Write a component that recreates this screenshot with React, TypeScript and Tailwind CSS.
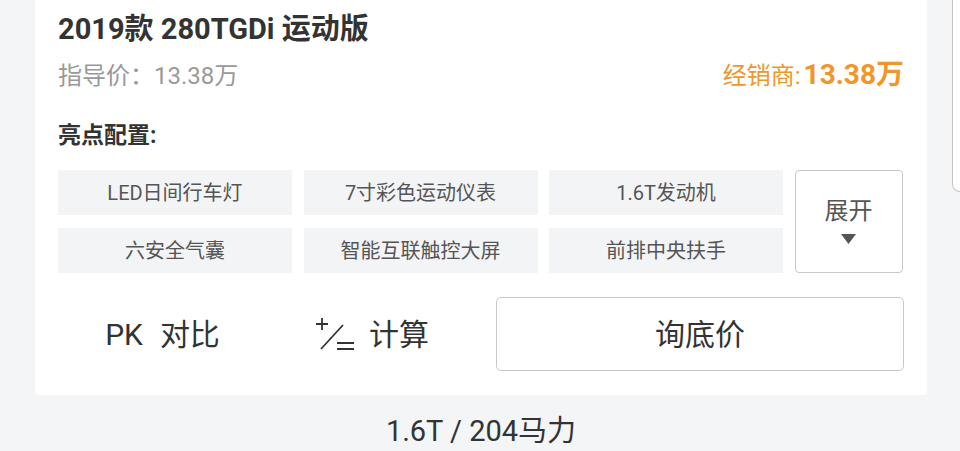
import React from "react";

const FONT = { fontFamily: 'Roboto, "Noto Sans CJK SC", "Noto Sans", sans-serif' };

const HIGHLIGHTS = [
  "LED日间行车灯",
  "7寸彩色运动仪表",
  "1.6T发动机",
  "六安全气囊",
  "智能互联触控大屏",
  "前排中央扶手",
];

function CalcIcon() {
  return (
    <svg width="42" height="36" viewBox="0 0 42 36" fill="none" stroke="#333" strokeWidth="1.8" strokeLinecap="butt">
      <path d="M2 8H14M8 2V14" />
      <path d="M7 33L29 9" />
      <path d="M23 27H40M23 33H40" />
    </svg>
  );
}

export default function App() {
  return (
    <div className="h-[451px] w-[960px] overflow-hidden bg-[#f4f5f7]" style={FONT}>
      <div className="flex items-start">
        <div className="ml-[35px] w-[892px]">
          <div className="rounded-b-[4px] bg-white px-[23px] pb-[24px] pt-[11px]">
            <div className="text-[29px] font-bold leading-[36px] text-[#333]">2019款 280TGDi 运动版</div>
            <div className="mt-[12px] flex items-baseline justify-between">
              <span className="text-[24px] leading-[32px] text-[#999]">指导价：13.38万</span>
              <span className="text-[24px] leading-[32px] text-[#f0962a]">
                经销商:<span className="ml-[3px] text-[28px] font-bold">13.38万</span>
              </span>
            </div>
            <div className="mt-[28px] text-[23px] font-bold leading-[32px] text-[#333]">亮点配置:</div>
            <div className="mt-[18px] grid grid-cols-[234px_234px_234px_108px] grid-rows-[45px_45px] gap-x-[11.5px] gap-y-[13px]">
              {HIGHLIGHTS.slice(0, 3).map((h) => (
                <div key={h} className="flex items-center justify-center bg-[#f3f4f6] text-[20px] text-[#555]">
                  {h}
                </div>
              ))}
              <div className="row-span-2 flex flex-col items-center justify-center rounded-[4px] border border-[#c8c8c8] pb-[4px] text-[24px] leading-[30px] text-[#555]">
                <span>展开</span>
                <svg width="15" height="10" viewBox="0 0 15 10" className="mt-[8px]">
                  <path d="M0 0H15L7.5 10Z" fill="#555" />
                </svg>
              </div>
              {HIGHLIGHTS.slice(3).map((h) => (
                <div key={h} className="flex items-center justify-center bg-[#f3f4f6] text-[20px] text-[#555]">
                  {h}
                </div>
              ))}
            </div>
            <div className="mt-[24px] flex items-center gap-[12px]">
              <div className="flex flex-1 items-center justify-center pl-[6px] text-[30px] text-[#333]">
                PK<span className="ml-[17px]">对比</span>
              </div>
              <div className="flex flex-1 items-center justify-center gap-[13px] pr-[14px] text-[30px] text-[#333]">
                <CalcIcon />
                <span>计算</span>
              </div>
              <button className="flex h-[74px] w-[408px] items-center justify-center rounded-[5px] border border-[#c8c8c8] text-[30px] text-[#333]">
                询底价
              </button>
            </div>
          </div>
          <div className="mt-[16px] text-center text-[29px] leading-[40px] text-[#333]">1.6T / 204马力</div>
        </div>
        <div className="ml-[25px] h-[192px] flex-1 rounded-bl-[8px] border-b border-l border-[#c4c4c4] bg-white" />
      </div>
    </div>
  );
}
